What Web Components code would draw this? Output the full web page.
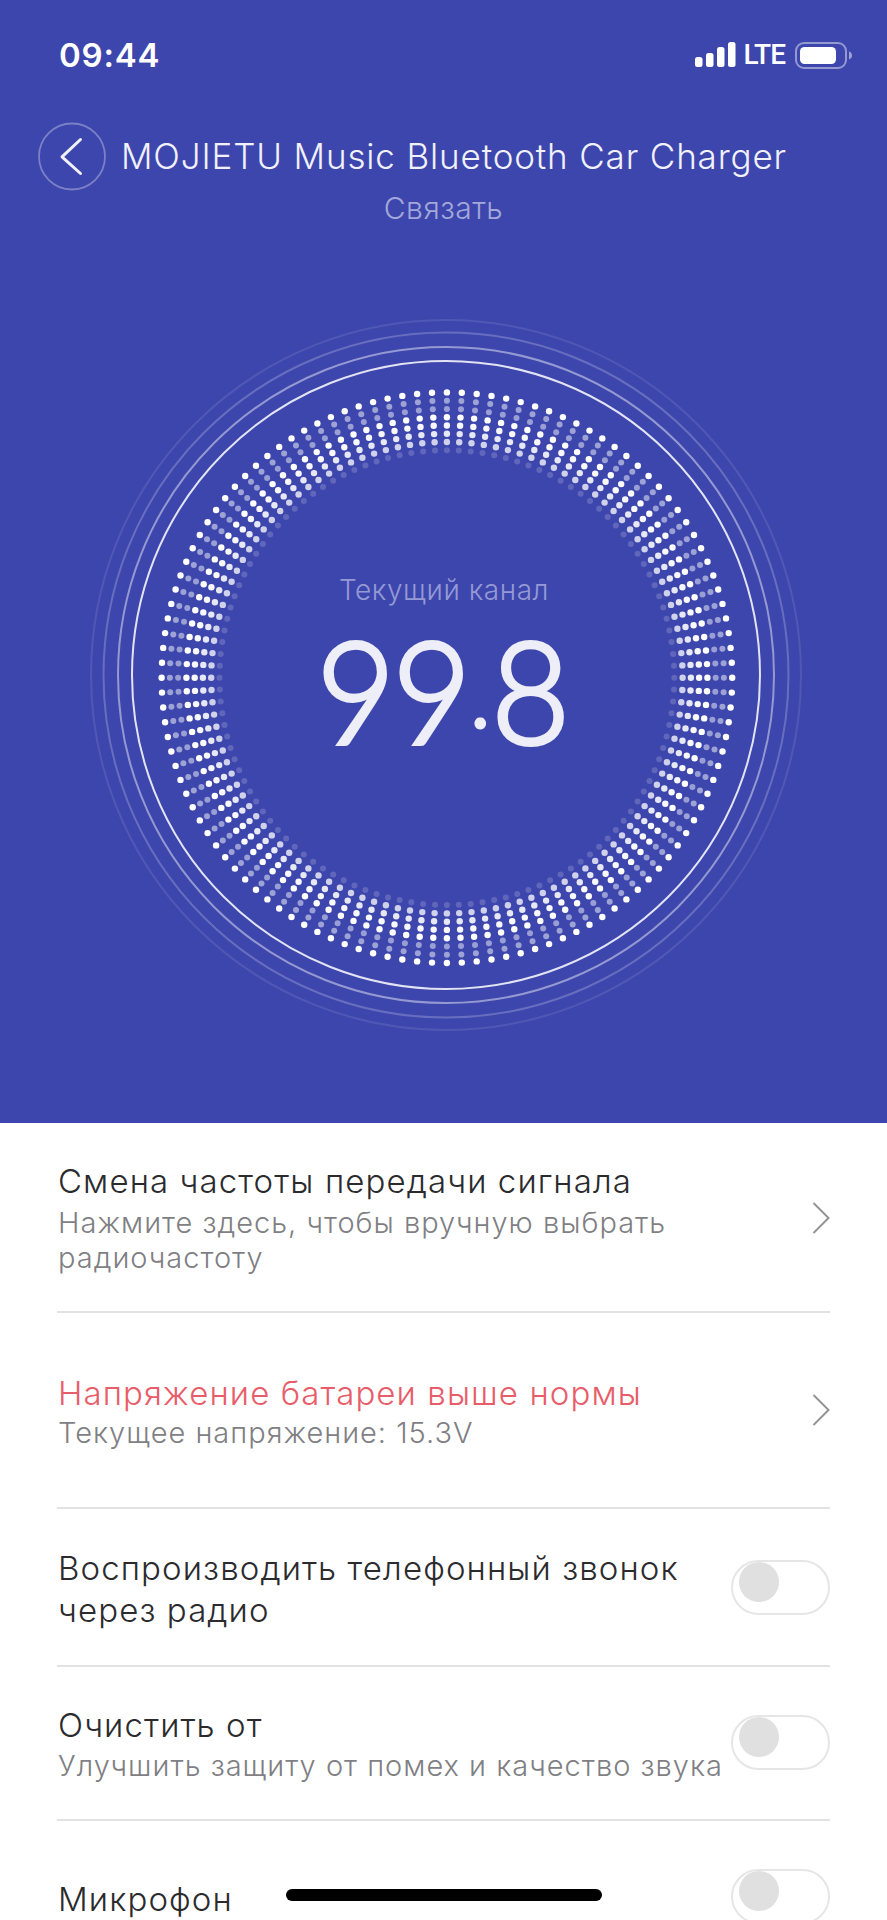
<!DOCTYPE html>
<html lang="ru">
<head>
<meta charset="utf-8">
<title>MOJIETU</title>
<style>
  html, body { margin: 0; background: #fff; }
  body {
    position: relative;
    height: 1920px;
    overflow: hidden;
    font-family: Inter, "Liberation Sans", sans-serif;
  }
</style>
</head>
<body>
  <app-hero>
    <status-bar time="09:44"></status-bar>
    <nav-header title="MOJIETU Music Bluetooth Car Charger" action="Связать"></nav-header>
    <channel-dial label="Текущий канал" whole="99" fraction="8"></channel-dial>
  </app-hero>

  <setting-row style="--pt:37px;--pb:36px;--gap:3px">
    <span slot="title">Смена частоты передачи сигнала</span>
    <span slot="sub">Нажмите здесь, чтобы вручную выбрать радиочастоту</span>
    <row-chevron slot="end"></row-chevron>
  </setting-row>
  <setting-row style="--pt:59px;--pb:57px;--gap:1px;--title:#e85d6a;--shift:3px">
    <span slot="title">Напряжение батареи выше нормы</span>
    <span slot="sub">Текущее напряжение: 15.3V</span>
    <row-chevron slot="end"></row-chevron>
  </setting-row>
  <setting-row style="--pt:38px;--pb:34px;--gap:0px;--shift:3px">
    <span slot="title">Воспроизводить телефонный звонок через радио</span>
    <toggle-switch slot="end"></toggle-switch>
  </setting-row>
  <setting-row style="--pt:37px;--pb:36px;--gap:2px;--shift:2px">
    <span slot="title">Очистить от</span>
    <span slot="sub">Улучшить защиту от помех и качество звука</span>
    <toggle-switch slot="end"></toggle-switch>
  </setting-row>
  <setting-row style="--pt:48px;--pb:20px;--gap:0px;--shift:4px" last>
    <span slot="title">Микрофон</span>
    <toggle-switch slot="end"></toggle-switch>
  </setting-row>

  <home-indicator></home-indicator>

<script>
const heroTemplate = document.createElement('template');
heroTemplate.innerHTML = `
  <style>
    :host {
      display: flex;
      flex-direction: column;
      height: 1123px;
      background: #3d46ad;
      color: #fff;
    }
  </style>
  <slot></slot>
`;

class AppHero extends HTMLElement {
  constructor() {
    super();
    this.attachShadow({ mode: 'open' });
    this.shadowRoot.appendChild(heroTemplate.content.cloneNode(true));
  }
}

class StatusBar extends HTMLElement {
  constructor() {
    super();
    this.attachShadow({ mode: 'open' });
    this.shadowRoot.innerHTML = `
      <style>
        :host {
          display: flex;
          align-items: center;
          justify-content: space-between;
          box-sizing: border-box;
          height: 122px;
          padding: 42px 34px 54px 59px;
        }
        .time { font: 600 33px/26px Inter, Roboto, sans-serif; letter-spacing: .8px; }
        .right { display: flex; align-items: center; }
        .lte { font: 500 28px/26px Roboto, sans-serif; letter-spacing: -1px; margin: 0 10px 0 7px; }
        svg { display: block; }
      </style>
      <span class="time"></span>
      <div class="right">
        <svg width="41" height="26" viewBox="0 0 41 26" fill="#fff">
          <rect x="0" y="15" width="7.5" height="10" rx="2.5"/>
          <rect x="11" y="11" width="7.5" height="14" rx="2.5"/>
          <rect x="22" y="5" width="7.5" height="20" rx="2.5"/>
          <rect x="33" y="0" width="7.5" height="25" rx="2.5"/>
        </svg>
        <span class="lte">LTE</span>
        <svg width="58" height="27" viewBox="0 0 58 27">
          <rect x="1" y="1" width="50" height="25" rx="8" fill="none" stroke="#fff" stroke-opacity=".45" stroke-width="2"/>
          <rect x="5" y="5" width="36" height="17" rx="4.5" fill="#fff"/>
          <path d="M54 9.5c2 .6 3 2.2 3 4s-1 3.400-3 4z" fill="#fff" fill-opacity=".5"/>
        </svg>
      </div>
    `;
    this.shadowRoot.querySelector('.time').textContent = this.getAttribute('time');
  }
}

class NavHeader extends HTMLElement {
  constructor() {
    super();
    this.attachShadow({ mode: 'open' });
    this.shadowRoot.innerHTML = `
      <style>
        :host { display: block; }
        .row { display: flex; align-items: center; height: 69px; padding-left: 38px; }
        .back { display: block; flex: none; }
        .title {
          margin-left: 15px;
          padding-bottom: 1px;
          font: 300 35px/66px Inter, sans-serif;
          letter-spacing: .85px;
          color: #f1f1fa;
          white-space: nowrap;
        }
        .action {
          margin-top: -3px;
          font: 300 30px/40px Inter, sans-serif;
          letter-spacing: .5px;
          text-align: center;
          color: #a3a8da;
        }
      </style>
      <div class="row">
        <svg class="back" width="68" height="69" viewBox="0 0 68 69" fill="none">
          <circle cx="34" cy="34.500" r="33" stroke="#fff" stroke-opacity=".32" stroke-width="1.800"/>
          <path d="M42.500 17.500 24 34.800 42.500 51.500" stroke="#f1f1fa" stroke-width="3" stroke-linecap="round" stroke-linejoin="round"/>
        </svg>
        <span class="title"></span>
      </div>
      <div class="action"></div>
    `;
    this.shadowRoot.querySelector('.title').textContent = this.getAttribute('title');
    this.shadowRoot.querySelector('.action').textContent = this.getAttribute('action');
    this.removeAttribute('title');
  }
}

class ChannelDial extends HTMLElement {
  constructor() {
    super();
    this.attachShadow({ mode: 'open' });
    this.shadowRoot.innerHTML = `
      <style>
        :host {
          display: grid;
          width: 712px;
          height: 712px;
          margin: 91px 0 0 90px;
        }
        svg, .reading { grid-area: 1 / 1; }
        svg { display: block; }
        .reading {
          display: flex;
          flex-direction: column;
          align-items: center;
          padding: 251px 4px 0 0;
        }
        .label {
          font: 300 28px/40px Inter, sans-serif;
          letter-spacing: .55px;
          color: #949ad4;
        }
        .value {
          margin: 9px 4px 0 0;
          font: 300 143px/140px Lato, sans-serif;
          letter-spacing: -3px;
          color: #eeeef8;
          -webkit-text-stroke: 4px #eeeef8;
          white-space: nowrap;
          transform: scaleX(.95);
        }
        .dot {
          font-weight: 700;
          font-size: 80px;
          -webkit-text-stroke: 0;
          vertical-align: 15px;
          margin: 0 5px 0 3px;
        }
      </style>
      <svg width="712" height="712" viewBox="-356 -356 712 712"></svg>
      <div class="reading">
        <span class="label"></span>
        <span class="value"><span class="w"></span><span class="dot">.</span><span class="f"></span></span>
      </div>
    `;
    this.shadowRoot.querySelector('.label').textContent = this.getAttribute('label');
    this.shadowRoot.querySelector('.w').textContent = this.getAttribute('whole');
    this.shadowRoot.querySelector('.f').textContent = this.getAttribute('fraction');
    this.drawRings();
  }

  drawRings() {
    const svg = this.shadowRoot.querySelector('svg');
    let out = '';
    // rings fade towards the outside
    [[314, .85, 2], [328, .45, 2], [342.500, .22, 2], [355, .1, 2]].forEach(([r, o, w]) => {
      out += `<circle r="${r}" fill="none" stroke="#fff" stroke-opacity="${o}" stroke-width="${w}"/>`;
    });
    // 120 spokes of 8 dots, outermost row first
    const rows = [[1, 3.200], [.5, 3], [.48, 3], [1, 3.200], [.97, 3.200], [.88, 3.200], [.76, 3.200], [.18, 3]];
    for (let i = 0; i < 120; i++) {
      const a = i * 3 * Math.PI / 180;
      rows.forEach(([o, d], n) => {
        const r = 285.3 - n * 8.27;
        const x = (0.9 + r * Math.sin(a)).toFixed(1);
        const y = (2.7 - r * Math.cos(a)).toFixed(1);
        out += `<circle cx="${x}" cy="${y}" r="${d}" fill="#fff" fill-opacity="${o}"/>`;
      });
    }
    svg.innerHTML = out;
  }
}

const rowTemplate = document.createElement('template');
rowTemplate.innerHTML = `
  <style>
    :host { display: block; padding: 0 57px; }
    .row {
      display: flex;
      align-items: center;
      gap: 4px;
      padding: var(--pt) 0 var(--pb) 1px;
      border-bottom: 2px solid #e2e2e4;
    }
    :host([last]) .row { border-bottom: 0; }
    .text { flex: 1; min-width: 0; }
    .title {
      font: 300 33px/42px Inter, sans-serif;
      letter-spacing: 1.1px;
      color: var(--title, #2b2b2e);
    }
    .sub {
      margin-top: var(--gap);
      font: 300 29px/35px Inter, sans-serif;
      letter-spacing: 1px;
      color: #7f7f84;
    }
    .end { flex: none; margin-bottom: var(--shift, 0); }
    ::slotted(*) { display: block; }
  </style>
  <div class="row">
    <div class="text">
      <div class="title"><slot name="title"></slot></div>
      <div class="sub"><slot name="sub"></slot></div>
    </div>
    <div class="end"><slot name="end"></slot></div>
  </div>
`;

class SettingRow extends HTMLElement {
  constructor() {
    super();
    this.attachShadow({ mode: 'open' });
    this.shadowRoot.appendChild(rowTemplate.content.cloneNode(true));
  }
}

class RowChevron extends HTMLElement {
  constructor() {
    super();
    this.attachShadow({ mode: 'open' });
    this.shadowRoot.innerHTML = `
      <style>:host { display: block; } svg { display: block; }</style>
      <svg width="18" height="32" viewBox="0 0 18 32" fill="none">
        <path d="M1.500 1 16.500 16 1.500 31" stroke="#949497" stroke-width="2"/>
      </svg>
    `;
  }
}

class ToggleSwitch extends HTMLElement {
  constructor() {
    super();
    this.attachShadow({ mode: 'open' });
    this.shadowRoot.innerHTML = `
      <style>
        :host {
          display: flex;
          align-items: center;
          box-sizing: border-box;
          width: 99px;
          height: 55px;
          padding-left: 6px;
          background: #fff;
          border: 2px solid #e6e6e8;
          border-radius: 28px;
        }
        i { display: block; width: 40px; height: 40px; border-radius: 50%; background: #e0e0e0; }
      </style>
      <i></i>
    `;
  }
}

class HomeIndicator extends HTMLElement {
  constructor() {
    super();
    this.attachShadow({ mode: 'open' });
    this.shadowRoot.innerHTML = `
      <style>
        :host {
          position: absolute;
          left: 286px;
          top: 1889px;
          width: 316px;
          height: 12px;
          border-radius: 6px;
          background: #000;
        }
      </style>
    `;
  }
}

customElements.define('app-hero', AppHero);
customElements.define('status-bar', StatusBar);
customElements.define('nav-header', NavHeader);
customElements.define('channel-dial', ChannelDial);
customElements.define('setting-row', SettingRow);
customElements.define('row-chevron', RowChevron);
customElements.define('toggle-switch', ToggleSwitch);
customElements.define('home-indicator', HomeIndicator);
</script>
</body>
</html>
